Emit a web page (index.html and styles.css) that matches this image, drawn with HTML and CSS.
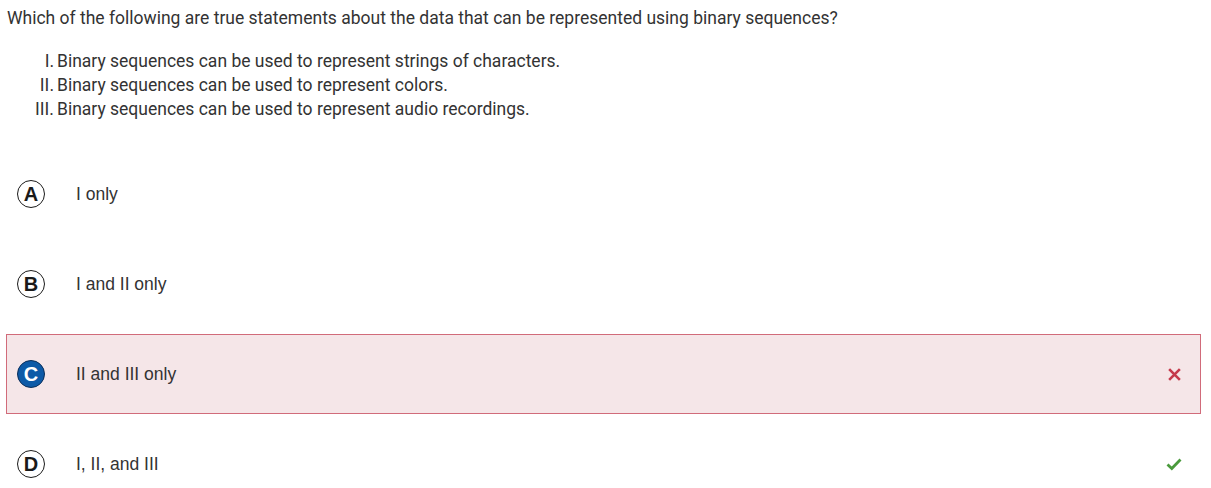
FILE: index.html
```html
<!DOCTYPE html>
<html>
<head>
<meta charset="utf-8">
<link rel="stylesheet" href="styles.css">
</head>
<body>
<div class="question">
  <p class="stem">Which of the following are true statements about the data that can be represented using binary sequences?</p>
  <ol class="statements">
    <li><span class="num">I.</span><span>Binary sequences can be used to represent strings of characters.</span></li>
    <li><span class="num">II.</span><span>Binary sequences can be used to represent colors.</span></li>
    <li><span class="num">III.</span><span>Binary sequences can be used to represent audio recordings.</span></li>
  </ol>
</div>
<div class="options">
  <div class="option">
    <span class="badge">A</span>
    <span class="label">I only</span>
  </div>
  <div class="option">
    <span class="badge">B</span>
    <span class="label">I and II only</span>
  </div>
  <div class="option selected">
    <span class="badge filled">C</span>
    <span class="label">II and III only</span>
    <svg class="mark" width="15" height="15" viewBox="0 0 14 14"><path d="M2 2 L12 12 M12 2 L2 12" stroke="#c5394b" stroke-width="2.4" fill="none"/></svg>
  </div>
  <div class="option">
    <span class="badge">D</span>
    <span class="label">I, II, and III</span>
    <svg class="mark" width="16" height="14" viewBox="0 0 16 14"><path d="M1.5 7.5 L5.8 11.5 L14.5 2.5" stroke="#4a9a3c" stroke-width="2.8" fill="none"/></svg>
  </div>
</div>
</body>
</html>
```
FILE: styles.css
```css
* { box-sizing: border-box; }
body {
  margin: 0;
  padding: 0 10px 0 6px;
  background: #fff;
  color: #333;
  font-family: Roboto, "Liberation Sans", sans-serif;
}
.question {
  padding-left: 1px;
}
.stem {
  margin: 0;
  padding-top: 6px;
  font-size: 17.5px;
  line-height: 24px;
  color: #333;
}
.statements {
  list-style: none;
  margin: 0;
  padding: 19px 0 0 0;
  font-size: 17.5px;
  line-height: 24px;
}
.statements li {
  display: flex;
}
.statements .num {
  width: 50px;
  text-align: right;
  padding-right: 3px;
}
.options {
  display: flex;
  flex-direction: column;
  gap: 10px;
  padding-top: 33px;
}
.option {
  height: 80px;
  display: flex;
  align-items: center;
  padding: 0 18px 0 10px;
  border: 1px solid transparent;
}
.option.selected {
  background: #f5e6e8;
  border-color: #d16b7a;
}
.badge {
  width: 28px;
  height: 28px;
  border-radius: 50%;
  border: 1.6px solid #1a1a1a;
  display: flex;
  align-items: center;
  justify-content: center;
  font-family: "Liberation Sans", Arial, sans-serif;
  font-weight: bold;
  font-size: 20px;
  color: #1a1a1a;
  flex: none;
}
.badge.filled {
  background: #0d5aa7;
  border-color: #0b2f5a;
  color: #fff;
}
.label {
  margin-left: 31px;
  font-family: "Liberation Sans", Arial, sans-serif;
  font-size: 17.5px;
  color: #333;
  flex: 1;
}
.mark {
  flex: none;
}
```
